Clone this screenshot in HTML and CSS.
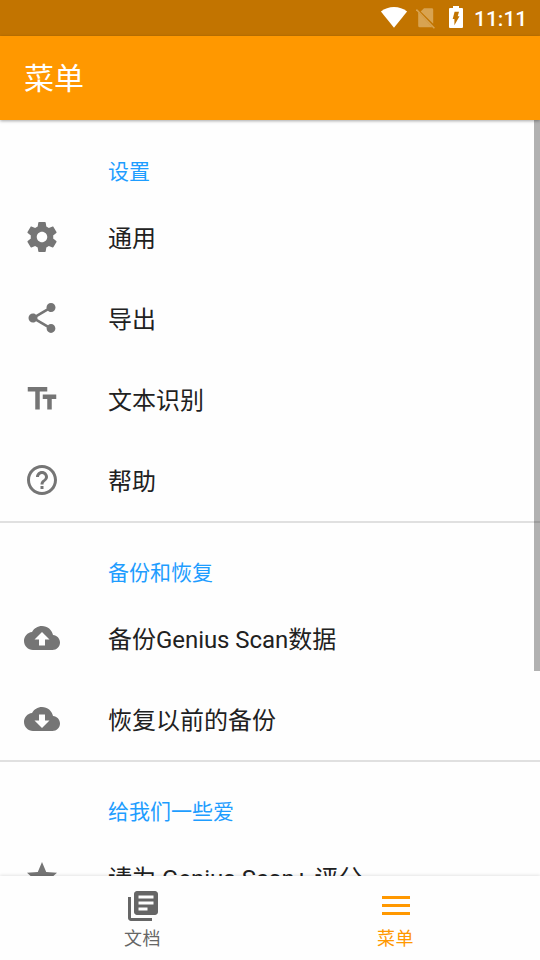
FILE: index.html
```html
<!DOCTYPE html>
<html lang="zh-CN">
<head>
<meta charset="utf-8">
<title>菜单</title>
<link rel="stylesheet" href="styles.css">
</head>
<body>
<div class="app">
  <div class="status">
    <svg class="wifi" width="28" height="22" viewBox="0 0 28 22"><path d="M.9 5.400C8-.6 20-.6 27.100 5.400L14 21.800z"/></svg>
    <svg class="nosim" width="20" height="22" viewBox="0 0 20 22"><path d="M8 .2H15.800Q17.200.2 17.200 1.600V15.800L4.700 3.500zM2.200 4.300L16.500 19.200H3.700Q2.200 19.200 2.200 17.700z"/><path d="M.4 1.500L18.400 20.200" stroke="#d8a351" stroke-width="1.500"/></svg>
    <svg class="battery" width="14" height="22" viewBox="0 0 14 22"><path d="M4 0h6v2h3q1 0 1 1v18q0 1-1 1H1q-1 0-1-1V3q0-1 1-1h3z"/><path class="bolt" d="M5.600 5.800H10L8.700 10.300H10.500L5.400 19.200V13H3.700z"/></svg>
    <span class="clock">11:11</span>
  </div>
  <header class="toolbar"><h1>菜单</h1></header>
  <main class="list">
    <section>
      <h2>设置</h2>
      <div class="row"><svg class="icon" viewBox="0 0 24 24"><path d="M19.430 12.980c.04-.32.07-.64.07-.98s-.03-.66-.07-.98l2.110-1.650c.19-.15.24-.42.12-.64l-2-3.460c-.12-.22-.39-.3-.61-.22l-2.490 1c-.52-.4-1.080-.73-1.690-.98l-.38-2.650C14.460 2.180 14.250 2 14 2h-4c-.25 0-.46.18-.49.42l-.38 2.650c-.61.25-1.170.59-1.690.98l-2.490-1c-.23-.09-.49 0-.61.22l-2 3.460c-.13.22-.07.49.12.64l2.110 1.650c-.04.32-.07.65-.07.98s.03.66.07.98l-2.110 1.650c-.19.15-.24.42-.12.64l2 3.460c.12.22.39.3.61.22l2.490-1c.52.4 1.080.73 1.690.98l.38 2.650c.03.24.24.42.49.42h4c.25 0 .46-.18.49-.42l.38-2.650c.61-.25 1.170-.59 1.690-.98l2.490 1c.23.09.49 0 .61-.22l2-3.460c.12-.22.07-.49-.12-.64l-2.110-1.650zM12 15.500c-1.930 0-3.500-1.570-3.500-3.500s1.570-3.500 3.500-3.500 3.500 1.570 3.500 3.500-1.570 3.500-3.500 3.500z"/></svg><span>通用</span></div>
      <div class="row"><svg class="icon" viewBox="0 0 24 24"><path d="M18 16.080c-.76 0-1.440.3-1.960.77L8.910 12.700c.05-.23.09-.46.09-.7s-.04-.47-.09-.7l7.050-4.110c.54.5 1.250.81 2.040.81 1.660 0 3-1.340 3-3s-1.340-3-3-3-3 1.340-3 3c0 .24.04.47.09.7L8.040 9.810C7.500 9.310 6.790 9 6 9c-1.660 0-3 1.340-3 3s1.340 3 3 3c.79 0 1.500-.31 2.040-.81l7.120 4.160c-.05.21-.08.43-.08.65 0 1.610 1.310 2.920 2.920 2.920s2.920-1.310 2.920-2.920-1.310-2.920-2.920-2.920z"/></svg><span>导出</span></div>
      <div class="row"><svg class="icon" viewBox="0 0 24 24"><path d="M2.500 4v3h5v12h3V7h5V4h-13zm19 5h-9v3h3v7h3v-7h3V9z"/></svg><span>文本识别</span></div>
      <div class="row"><svg class="icon" viewBox="0 0 24 24"><path d="M11 18h2v-2h-2v2zm1-16C6.480 2 2 6.480 2 12s4.480 10 10 10 10-4.480 10-10S17.520 2 12 2zm0 18c-4.410 0-8-3.590-8-8s3.590-8 8-8 8 3.590 8 8-3.590 8-8 8zm0-14c-2.210 0-4 1.790-4 4h2c0-1.100.9-2 2-2s2 .9 2 2c0 2-3 1.750-3 5h2c0-2.250 3-2.500 3-5 0-2.210-1.790-4-4-4z"/></svg><span>帮助</span></div>
    </section>
    <section>
      <h2>备份和恢复</h2>
      <div class="row"><svg class="icon" viewBox="0 0 24 24"><path d="M19.350 10.040C18.670 6.590 15.640 4 12 4 9.110 4 6.600 5.640 5.350 8.040 2.340 8.360 0 10.910 0 14c0 3.310 2.690 6 6 6h13c2.760 0 5-2.240 5-5 0-2.640-2.050-4.780-4.650-4.960zM14 13v4h-4v-4H7l5-5 5 5h-3z"/></svg><span class="mixed">备份Genius Scan数据</span></div>
      <div class="row"><svg class="icon" viewBox="0 0 24 24"><path d="M19.350 10.040C18.670 6.590 15.640 4 12 4 9.110 4 6.600 5.640 5.350 8.040 2.340 8.360 0 10.910 0 14c0 3.310 2.690 6 6 6h13c2.760 0 5-2.240 5-5 0-2.640-2.050-4.780-4.650-4.960zM17 13l-5 5-5-5h3V9h4v4h3z"/></svg><span>恢复以前的备份</span></div>
    </section>
    <section>
      <h2>给我们一些爱</h2>
      <div class="row"><svg class="icon" viewBox="0 0 24 24"><path d="M12 17.270L18.180 21l-1.640-7.030L22 9.240l-7.190-.61L12 2 9.190 8.630 2 9.240l5.460 4.730L5.820 21z"/></svg><span>请为 Genius Scan+ 评分</span></div>
    </section>
    <div class="scrollbar"></div>
  </main>
  <nav class="tabs">
    <div class="tab"><svg class="icon" viewBox="0 0 24 24"><path d="M4 6H2v14c0 1.100.9 2 2 2h14v-2H4V6zm16-4H8c-1.100 0-2 .9-2 2v12c0 1.100.9 2 2 2h12c1.100 0 2-.9 2-2V4c0-1.100-.9-2-2-2zm-1 9H9V9h10v2zm-4 4H9v-2h6v2zm4-8H9V5h10v2z"/></svg><span>文档</span></div>
    <div class="tab active"><svg class="icon" viewBox="0 0 36 36"><path d="M4 8h28v3H4zM4 16h28v3H4zM4 24h28v3H4z"/></svg><span>菜单</span></div>
  </nav>
</div>
</body>
</html>
```
FILE: styles.css
```css
* { box-sizing: border-box; }
body {
  margin: 0;
  font-family: Roboto, "Noto Sans CJK SC", sans-serif;
  background: #fefefe;
}
.app {
  width: 540px;
  height: 960px;
  display: flex;
  flex-direction: column;
  overflow: hidden;
}
svg { display: block; flex: none; }
.status {
  flex: none;
  height: 36px;
  display: flex;
  align-items: flex-start;
  padding: 6px 0 0 380px;
  background: #c27400;
  fill: #fff;
  color: #fff;
}
.nosim { margin: 2px 0 0 8px; fill: #d8a351; }
.battery { margin-left: 13px; }
.bolt { fill: #c27400; }
.clock {
  margin-left: 11px;
  font-size: 21px;
  font-weight: 500;
  line-height: 27px;
}
.toolbar {
  flex: none;
  position: relative;
  z-index: 1;
  height: 84px;
  display: flex;
  align-items: center;
  padding: 2px 0 0 24px;
  background: #ff9800;
  box-shadow: 0 1px 3px rgba(0, 0, 0, .35);
}
h1 { margin: 0; font-size: 30px; font-weight: 400; line-height: 36px; color: #fff; }
.list {
  flex: 1;
  min-height: 0;
  position: relative;
  overflow: hidden;
  padding-top: 2px;
}
section + section { border-top: 2px solid #e0e0e0; }
h2 {
  margin: 0;
  height: 75px;
  padding: 35px 0 0 108px;
  font-size: 21px;
  font-weight: 400;
  line-height: 30px;
  color: #1e9dff;
}
.row {
  height: 81px;
  display: flex;
  align-items: flex-start;
  padding: 22px 0 0 24px;
  gap: 48px;
  font-size: 24px;
  line-height: 36px;
  color: #212121;
}
.row span { padding-top: 2px; }
.row .mixed { letter-spacing: -.04px; }
.icon { width: 36px; height: 36px; fill: #757575; }
.scrollbar {
  position: absolute;
  top: 0;
  right: 0;
  width: 6px;
  height: 551px;
  background: rgba(0, 0, 0, .3);
}
.tabs {
  flex: none;
  position: relative;
  height: 84px;
  display: flex;
  padding: 12px 0 0 16.500px;
  background: #fefefe;
  box-shadow: 0 -1px 3px rgba(0, 0, 0, .1);
}
.tab {
  width: 253px;
  display: flex;
  flex-direction: column;
  align-items: center;
  font-size: 18px;
  line-height: 30px;
  color: #666;
}
.tab span { letter-spacing: .5px; padding-right: 1px; }
.tab .icon { fill: #666; }
.tab.active { color: #ff9800; }
.tab.active .icon { fill: #ff9800; }
```
